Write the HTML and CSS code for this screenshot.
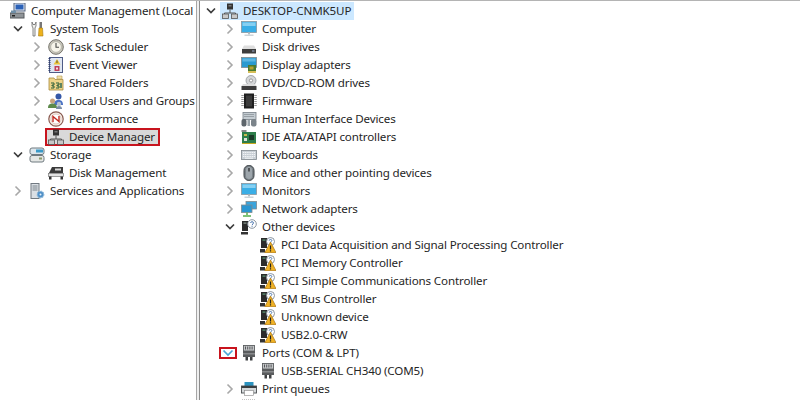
FILE: index.html
```html
<!DOCTYPE html>
<html lang="en">
<head>
<meta charset="utf-8">
<title>Computer Management</title>
<link rel="stylesheet" href="styles.css">
</head>
<body>
<svg class="defs" width="0" height="0" aria-hidden="true">
  <symbol id="chev-r" viewBox="0 0 10 12"><path d="M2.5 1.5 7 6l-4.5 4.5" fill="none" stroke="#a8a8a8" stroke-width="1.6"/></symbol>
  <symbol id="chev-d" viewBox="0 0 10 12"><path d="M1 3.5 5 7.5l4-4" fill="none" stroke="#3c3c3c" stroke-width="1.7"/></symbol>
  <symbol id="chev-b" viewBox="0 0 12 8"><path d="M1.5 1.5 6 6l4.5-4.5" fill="none" stroke="#4aa6d6" stroke-width="1.7"/></symbol>
  <symbol id="mgmt" viewBox="0 0 16 16"><rect x="4" y="0" width="11" height="8" fill="#e8eef8" stroke="#50607c"/><rect x="5.5" y="1.5" width="8" height="5" fill="#2c62b8"/><rect x="0" y="10" width="14" height="5" fill="#8f9498" stroke="#55585c"/><path d="M1 7.500h5v2.500H1z" fill="#6f8fa8"/><rect x="2" y="12" width="3" height="1.500" fill="#222"/></symbol>
  <symbol id="tools" viewBox="0 0 16 16"><path d="M3 1v4l1 2v8h2V7l1-2V1L6 3.500H4z" fill="#f2f2ee" stroke="#6a6a6a" stroke-width=".8"/><rect x="10.500" y="1" width="2.500" height="6" fill="#777"/><path d="M10 7h3.500l.5 8h-4.500z" fill="#eeb21c" stroke="#a67a10" stroke-width=".6"/></symbol>
  <symbol id="clock" viewBox="0 0 16 16"><circle cx="8" cy="8" r="7.300" fill="#c9c7bd" stroke="#75736a"/><circle cx="8" cy="8" r="5.300" fill="#f7f5ea" stroke="#a5a295" stroke-width=".6"/><path d="M8 4v4.300h3" fill="none" stroke="#4a4a48" stroke-width="1.100"/></symbol>
  <symbol id="event" viewBox="0 0 16 16"><rect x="1.500" y="0.500" width="13" height="15" fill="#dfe6f2" stroke="#4e5c86"/><path d="M1.500 1v14" stroke="#33416e" stroke-width="2" stroke-dasharray="1 1"/><path d="M9 2 12.500 7.500h-7z" fill="#eec53a"/><rect x="8.500" y="3.500" width="1" height="2.500" fill="#553"/><rect x="6.500" y="9" width="5" height="5" fill="#c0405a"/><rect x="8" y="10.500" width="2" height="2" fill="#f5dde2"/></symbol>
  <symbol id="folder" viewBox="0 0 16 16"><path d="M1 3h5l1 1.500h8V15H1z" fill="#eed488" stroke="#a88a3e" stroke-width=".8"/><path d="M9 1h5v3H9z" fill="#f2e2a8" stroke="#b59a55" stroke-width=".6"/><path d="M3 8h3v2H4v1h2v2H3M8 8h3v2H9v1h2v2H8" fill="none" stroke="#2d5f38" stroke-width="1"/><rect x="12" y="8" width="2" height="5" fill="#5f8560"/></symbol>
  <symbol id="users" viewBox="0 0 16 16"><circle cx="10.500" cy="3.500" r="3" fill="#3458a8"/><path d="M6 12c0-4 2-5 4.500-5S15 8 15 12z" fill="#4b72c4"/><circle cx="4.500" cy="8" r="2.500" fill="#c9a27c"/><path d="M0 15c0-3.500 2-4.500 4.500-4.500S9 11.500 9 15z" fill="#5d8a4a"/><circle cx="11" cy="11" r="2.200" fill="#b8c4d2"/><path d="M8 16c0-2 1-3 3-3s3 1 3 3z" fill="#7c8ea6"/></symbol>
  <symbol id="perf" viewBox="0 0 16 16"><circle cx="8" cy="8" r="7.200" fill="#f5f0e8" stroke="#8a5a50" stroke-width="1.200"/><circle cx="8" cy="8" r="5" fill="#fff" stroke="#d9b7ae" stroke-width=".8"/><path d="M5 11V5.500l6 5V5" fill="none" stroke="#c22a20" stroke-width="1.400"/></symbol>
  <symbol id="dev" viewBox="0 0 16 16"><rect x="5" y="0.500" width="6" height="6" fill="#333"/><rect x="6.500" y="2" width="3" height="1.500" fill="#777"/><path d="M8 6.500V10M2.500 13v-3h11v3" fill="none" stroke="#555"/><rect x="0.500" y="11" width="6" height="4.500" fill="#c8c8c8" stroke="#555" stroke-width=".8"/><rect x="9.500" y="11" width="6" height="4.500" fill="#c8c8c8" stroke="#555" stroke-width=".8"/></symbol>
  <symbol id="storage" viewBox="0 0 16 16"><rect x="1" y="1" width="14" height="6.500" rx="2" fill="#dce6ec" stroke="#6f7a80"/><rect x="7" y="2.500" width="7" height="3" fill="#3a9ac8"/><rect x="1" y="8.500" width="14" height="6.500" rx="2" fill="#e4e6e4" stroke="#6f7a80"/><rect x="10" y="10.500" width="3" height="2" fill="#8c9a6c"/></symbol>
  <symbol id="disk" viewBox="0 0 16 16"><path d="M4 2h11v6H1z" fill="#3a3a3a"/><rect x="7" y="3.500" width="6" height="2" fill="#d8d8d8"/><rect x="0.500" y="8.500" width="15" height="3" fill="#e2e2e2" stroke="#777" stroke-width=".7"/><rect x="1" y="11.500" width="2.500" height="3" fill="#333"/><rect x="12.500" y="11.500" width="2.500" height="3" fill="#333"/></symbol>
  <symbol id="services" viewBox="0 0 16 16"><rect x="2" y="0.500" width="8" height="15" fill="#dadfe4" stroke="#707880"/><path d="M3.500 3h5M3.500 5h5M3.500 7h5" stroke="#7d858c"/><circle cx="11.500" cy="11.500" r="3.300" fill="#4f90c8" stroke="#8fb8d8" stroke-width="1.200" stroke-dasharray="1.400 .8"/><circle cx="11.500" cy="11.500" r="1" fill="#e8f2fa"/></symbol>
  <symbol id="monitor" viewBox="0 0 16 16"><rect x="0.500" y="0.500" width="15" height="11" fill="#3aaee6" stroke="#8c979e" stroke-width=".8"/><rect x="1.500" y="1.500" width="13" height="3.500" fill="#86d0f2"/><rect x="7" y="11.500" width="2" height="2" fill="#b4bdc2"/><rect x="3.500" y="13.500" width="9" height="1.500" fill="#cdd4d8"/></symbol>
  <symbol id="hdd" viewBox="0 0 16 16"><path d="M3 6.500h10l2 3.500H1z" fill="#dedede"/><rect x="1" y="10" width="14" height="4.500" fill="#3d3d3d"/><rect x="11" y="11.500" width="2.500" height="1" fill="#9ac"/></symbol>
  <symbol id="display" viewBox="0 0 16 16"><rect x="0.500" y="0.500" width="15" height="10" fill="#2a9ad0" stroke="#7f8a90" stroke-width=".8"/><rect x="1.500" y="1.500" width="13" height="3" fill="#5db6e2"/><rect x="7" y="8" width="8" height="6" fill="#4a7a30"/><rect x="8.500" y="9.500" width="4" height="3" fill="#b8a030"/><path d="M7 15h8" stroke="#c8a820" stroke-width="1.500"/></symbol>
  <symbol id="dvd" viewBox="0 0 16 16"><circle cx="10" cy="5.500" r="5" fill="#d4d6d8" stroke="#888c90" stroke-width=".7"/><circle cx="10" cy="5.500" r="1.600" fill="#fff" stroke="#777" stroke-width=".7"/><path d="M2 9h12l1.500 2h-15z" fill="#dcdcdc"/><rect x="0.500" y="11" width="15" height="4" fill="#3d3d3d"/></symbol>
  <symbol id="chip" viewBox="0 0 16 16"><rect x="3" y="0.500" width="10" height="15" fill="#1f1f1f"/><rect x="5" y="2.500" width="6" height="11" fill="#3b3b3b"/><path d="M1.500 2v12M14.500 2v12" stroke="#9a9a9a" stroke-width="2.500" stroke-dasharray="1 1"/></symbol>
  <symbol id="hid" viewBox="0 0 16 16"><rect x="2" y="1.500" width="13" height="7" fill="#c4ccd2" stroke="#788088" stroke-width=".8"/><path d="M3.500 3.500h10M3.500 5.500h10" stroke="#6a7278" stroke-dasharray="1 1"/><rect x="0.500" y="8" width="5" height="7.500" rx="2" fill="#5e666c"/><rect x="10" y="8" width="5.500" height="7.500" rx="2" fill="#7b848a"/><rect x="6.500" y="9" width="2.500" height="6" fill="#9aa4aa"/></symbol>
  <symbol id="ide" viewBox="0 0 16 16"><rect x="0.500" y="1" width="5" height="2" fill="#8a8a8a"/><rect x="1" y="3" width="14" height="11" fill="#2e7d4a"/><rect x="8" y="6" width="5" height="5" fill="#1c3a28"/><rect x="3" y="5" width="3" height="2" fill="#c8b84c"/><rect x="3" y="9" width="3" height="3" fill="#e0e0d8"/><path d="M1 14.500h14" stroke="#c8a820"/></symbol>
  <symbol id="kbd" viewBox="0 0 16 16"><rect x="0.500" y="3.500" width="15" height="9" fill="#c9d0d6" stroke="#7f878d" stroke-width=".8"/><path d="M2 5.500h12M2 7.500h12M2 9.500h12" stroke="#f2f4f6" stroke-dasharray="1.200 .6"/><path d="M4 11.200h8" stroke="#f2f4f6"/></symbol>
  <symbol id="mouse" viewBox="0 0 16 16"><rect x="3" y="0.500" width="10" height="15" rx="4.800" fill="#7a8288" stroke="#3c4246"/><rect x="5" y="2" width="6" height="12" rx="3" fill="#9da5ab"/><rect x="7.300" y="3" width="1.400" height="3.500" fill="#2f3335"/></symbol>
  <symbol id="net" viewBox="0 0 16 16"><rect x="5" y="0.500" width="10.500" height="7.500" fill="#3aa4dc" stroke="#7f8a90" stroke-width=".8"/><rect x="0.500" y="4" width="10.500" height="7.500" fill="#2a96d2" stroke="#7f8a90" stroke-width=".8"/><path d="M6 11.500V14M2 15h8" stroke="#55b04e" stroke-width="1.500"/></symbol>
  <symbol id="other" viewBox="0 0 16 16"><path d="M1 2h6v10H1z" fill="#2b2b2b"/><rect x="2.500" y="3.500" width="3" height="1.200" fill="#8a9a90"/><rect x="0" y="13" width="7" height="2.500" fill="#333"/><circle cx="11" cy="5" r="4.300" fill="#fff" stroke="#7f8a96" stroke-width=".9"/><path d="M9.600 4c0-1.800 2.900-1.800 2.900 0 0 1-1.400 1-1.400 2.100M11.100 6.800v1" fill="none" stroke="#3a6aa8" stroke-width=".9"/></symbol>
  <symbol id="warn" viewBox="0 0 16 16"><path d="M1 1h6v10H1z" fill="#2b2b2b"/><rect x="2.500" y="2.500" width="3" height="1.200" fill="#5f9a78"/><rect x="0" y="12" width="5" height="3.500" fill="#333"/><circle cx="10.500" cy="4.500" r="4" fill="#fff" stroke="#7f8a96" stroke-width=".9"/><path d="M9.200 3.600c0-1.600 2.600-1.600 2.600 0 0 .9-1.300.9-1.300 1.800" fill="none" stroke="#3a6aa8" stroke-width=".9"/><path d="M10.500 5 16 15.700H4.800z" fill="#f0b224" stroke="#a8700e" stroke-width=".7"/><path d="M10.500 8.500v4M10.500 13.200v1.200" stroke="#222" stroke-width="1.200"/></symbol>
  <symbol id="port" viewBox="0 0 16 16"><rect x="2.500" y="0.500" width="11" height="5.500" fill="#c4c6c8" stroke="#5c5e60" stroke-width=".9"/><path d="M4.500 1.500v3M6.700 1.500v3M8.900 1.500v3M11.100 1.500v3" stroke="#55575a"/><rect x="2" y="6" width="12" height="6" fill="#5a5c5e"/><rect x="2" y="8" width="12" height="1.500" fill="#87898b"/><rect x="4.500" y="12" width="2.500" height="3.500" fill="#3f4143"/><rect x="9" y="12" width="2.500" height="3.500" fill="#3f4143"/></symbol>
  <symbol id="print" viewBox="0 0 16 16"><rect x="3.500" y="1" width="9" height="4" fill="#2b93c0"/><rect x="0.500" y="5" width="15" height="7" fill="#d4d8da" stroke="#4a4e50" stroke-width=".9"/><rect x="0.500" y="5" width="15" height="2" fill="#3a3e40"/><rect x="3.500" y="9.500" width="9" height="5" fill="#fff" stroke="#888" stroke-width=".6"/></symbol>
  <symbol id="cpu" viewBox="0 0 16 16"><path d="M1 1h14" stroke="#888" stroke-dasharray="1 1"/><rect x="2" y="2" width="12" height="12" fill="#bbb"/></symbol>
</svg>

<main class="window">
  <nav class="pane left">
    <div class="row root"><svg class="ico"><use href="#mgmt"/></svg><span class="txt">Computer Management (Local</span></div>
    <div class="row d1"><span class="chev"><svg class="exp"><use href="#chev-d"/></svg></span><svg class="ico"><use href="#tools"/></svg><span class="txt">System Tools</span></div>
    <div class="row d2"><span class="chev"><svg class="col"><use href="#chev-r"/></svg></span><svg class="ico"><use href="#clock"/></svg><span class="txt">Task Scheduler</span></div>
    <div class="row d2"><span class="chev"><svg class="col"><use href="#chev-r"/></svg></span><svg class="ico"><use href="#event"/></svg><span class="txt">Event Viewer</span></div>
    <div class="row d2"><span class="chev"><svg class="col"><use href="#chev-r"/></svg></span><svg class="ico"><use href="#folder"/></svg><span class="txt">Shared Folders</span></div>
    <div class="row d2"><span class="chev"><svg class="col"><use href="#chev-r"/></svg></span><svg class="ico"><use href="#users"/></svg><span class="txt">Local Users and Groups</span></div>
    <div class="row d2"><span class="chev"><svg class="col"><use href="#chev-r"/></svg></span><svg class="ico"><use href="#perf"/></svg><span class="txt">Performance</span></div>
    <div class="row d2"><span class="chev"></span><span class="picked"><svg class="ico"><use href="#dev"/></svg><span class="txt">Device Manager</span></span></div>
    <div class="row d1"><span class="chev"><svg class="exp"><use href="#chev-d"/></svg></span><svg class="ico"><use href="#storage"/></svg><span class="txt">Storage</span></div>
    <div class="row d2"><span class="chev"></span><svg class="ico"><use href="#disk"/></svg><span class="txt">Disk Management</span></div>
    <div class="row d1"><span class="chev"><svg class="col"><use href="#chev-r"/></svg></span><svg class="ico"><use href="#services"/></svg><span class="txt">Services and Applications</span></div>
  </nav>
  <section class="pane right">
    <div class="row r0"><span class="chev"><svg class="exp"><use href="#chev-d"/></svg></span><span class="focus"><svg class="ico"><use href="#dev"/></svg><span class="txt">DESKTOP-CNMK5UP</span></span></div>
    <div class="row r1"><span class="chev"><svg class="col"><use href="#chev-r"/></svg></span><svg class="ico"><use href="#monitor"/></svg><span class="txt">Computer</span></div>
    <div class="row r1"><span class="chev"><svg class="col"><use href="#chev-r"/></svg></span><svg class="ico"><use href="#hdd"/></svg><span class="txt">Disk drives</span></div>
    <div class="row r1"><span class="chev"><svg class="col"><use href="#chev-r"/></svg></span><svg class="ico"><use href="#display"/></svg><span class="txt">Display adapters</span></div>
    <div class="row r1"><span class="chev"><svg class="col"><use href="#chev-r"/></svg></span><svg class="ico"><use href="#dvd"/></svg><span class="txt">DVD/CD-ROM drives</span></div>
    <div class="row r1"><span class="chev"><svg class="col"><use href="#chev-r"/></svg></span><svg class="ico"><use href="#chip"/></svg><span class="txt">Firmware</span></div>
    <div class="row r1"><span class="chev"><svg class="col"><use href="#chev-r"/></svg></span><svg class="ico"><use href="#hid"/></svg><span class="txt">Human Interface Devices</span></div>
    <div class="row r1"><span class="chev"><svg class="col"><use href="#chev-r"/></svg></span><svg class="ico"><use href="#ide"/></svg><span class="txt">IDE ATA/ATAPI controllers</span></div>
    <div class="row r1"><span class="chev"><svg class="col"><use href="#chev-r"/></svg></span><svg class="ico"><use href="#kbd"/></svg><span class="txt">Keyboards</span></div>
    <div class="row r1"><span class="chev"><svg class="col"><use href="#chev-r"/></svg></span><svg class="ico"><use href="#mouse"/></svg><span class="txt">Mice and other pointing devices</span></div>
    <div class="row r1"><span class="chev"><svg class="col"><use href="#chev-r"/></svg></span><svg class="ico"><use href="#monitor"/></svg><span class="txt">Monitors</span></div>
    <div class="row r1"><span class="chev"><svg class="col"><use href="#chev-r"/></svg></span><svg class="ico"><use href="#net"/></svg><span class="txt">Network adapters</span></div>
    <div class="row r1"><span class="chev"><svg class="exp"><use href="#chev-d"/></svg></span><svg class="ico"><use href="#other"/></svg><span class="txt">Other devices</span></div>
    <div class="row r2"><svg class="ico"><use href="#warn"/></svg><span class="txt">PCI Data Acquisition and Signal Processing Controller</span></div>
    <div class="row r2"><svg class="ico"><use href="#warn"/></svg><span class="txt">PCI Memory Controller</span></div>
    <div class="row r2"><svg class="ico"><use href="#warn"/></svg><span class="txt">PCI Simple Communications Controller</span></div>
    <div class="row r2"><svg class="ico"><use href="#warn"/></svg><span class="txt">SM Bus Controller</span></div>
    <div class="row r2"><svg class="ico"><use href="#warn"/></svg><span class="txt">Unknown device</span></div>
    <div class="row r2"><svg class="ico"><use href="#warn"/></svg><span class="txt">USB2.0-CRW</span></div>
    <div class="row r1"><span class="chev"><span class="boxed"><svg class="blue"><use href="#chev-b"/></svg></span></span><svg class="ico"><use href="#port"/></svg><span class="txt">Ports (COM &amp; LPT)</span></div>
    <div class="row r2"><svg class="ico"><use href="#port"/></svg><span class="txt">USB-SERIAL CH340 (COM5)</span></div>
    <div class="row r1"><span class="chev"><svg class="col"><use href="#chev-r"/></svg></span><svg class="ico"><use href="#print"/></svg><span class="txt">Print queues</span></div>
    <div class="row r1"><span class="chev"></span><svg class="ico"><use href="#cpu"/></svg></div>
  </section>
</main>
</body>
</html>
```

FILE: styles.css
```css
html, body {
  margin: 0;
  padding: 0;
  width: 800px;
  height: 400px;
  overflow: hidden;
  background: #fff;
}

.defs {
  position: absolute;
}

.window {
  display: flex;
  gap: 2px;
  width: 800px;
  height: 400px;
  box-sizing: border-box;
  border-top: 1px solid #b4b4b4;
  background: #efefef;
  font-family: "Noto Sans", "Open Sans", sans-serif;
  font-size: 11.6px;
  letter-spacing: -0.14px;
  color: #262626;
}

.pane {
  box-sizing: border-box;
  padding-top: 1px;
  overflow: hidden;
  height: 399px;
  background: #fff;
}

.left {
  width: 197px;
  flex: none;
  border-right: 1px solid #a6a6a6;
}

.right {
  flex: 1;
  border-left: 1px solid #8c8c8c;
}

.row {
  display: flex;
  align-items: center;
  height: 18px;
  white-space: nowrap;
}

.root { padding-left: 10px; }
.d1 { padding-left: 10px; }
.d2 { padding-left: 29px; }
.r0 { padding-left: 3px; }
.r1 { padding-left: 22px; }
.r2 { padding-left: 60px; }

.chev {
  position: relative;
  flex: none;
  display: flex;
  align-items: center;
  width: 19px;
  height: 18px;
}

.col {
  width: 10px;
  height: 12px;
  margin-left: 3px;
}

.exp {
  width: 10px;
  height: 12px;
  margin-left: 3px;
}

.ico {
  flex: none;
  width: 16px;
  height: 16px;
}

.txt {
  margin-left: 5px;
  padding-bottom: 2px;
}

.focus {
  display: flex;
  align-items: center;
  height: 18px;
  margin-left: -2px;
  padding: 0 3px 0 2px;
  background: #cce8ff;
}

.picked {
  display: flex;
  align-items: center;
  box-sizing: border-box;
  height: 18px;
  margin-left: -3px;
  padding: 0 3px 0 1px;
  background: #d9d9d9;
  border: 2px solid #c8141e;
}

.boxed {
  position: absolute;
  left: -3px;
  top: 3px;
  display: flex;
  align-items: center;
  justify-content: center;
  box-sizing: border-box;
  width: 18px;
  height: 12px;
  border: 2px solid #c8141e;
}

.blue {
  width: 12px;
  height: 8px;
}
```
